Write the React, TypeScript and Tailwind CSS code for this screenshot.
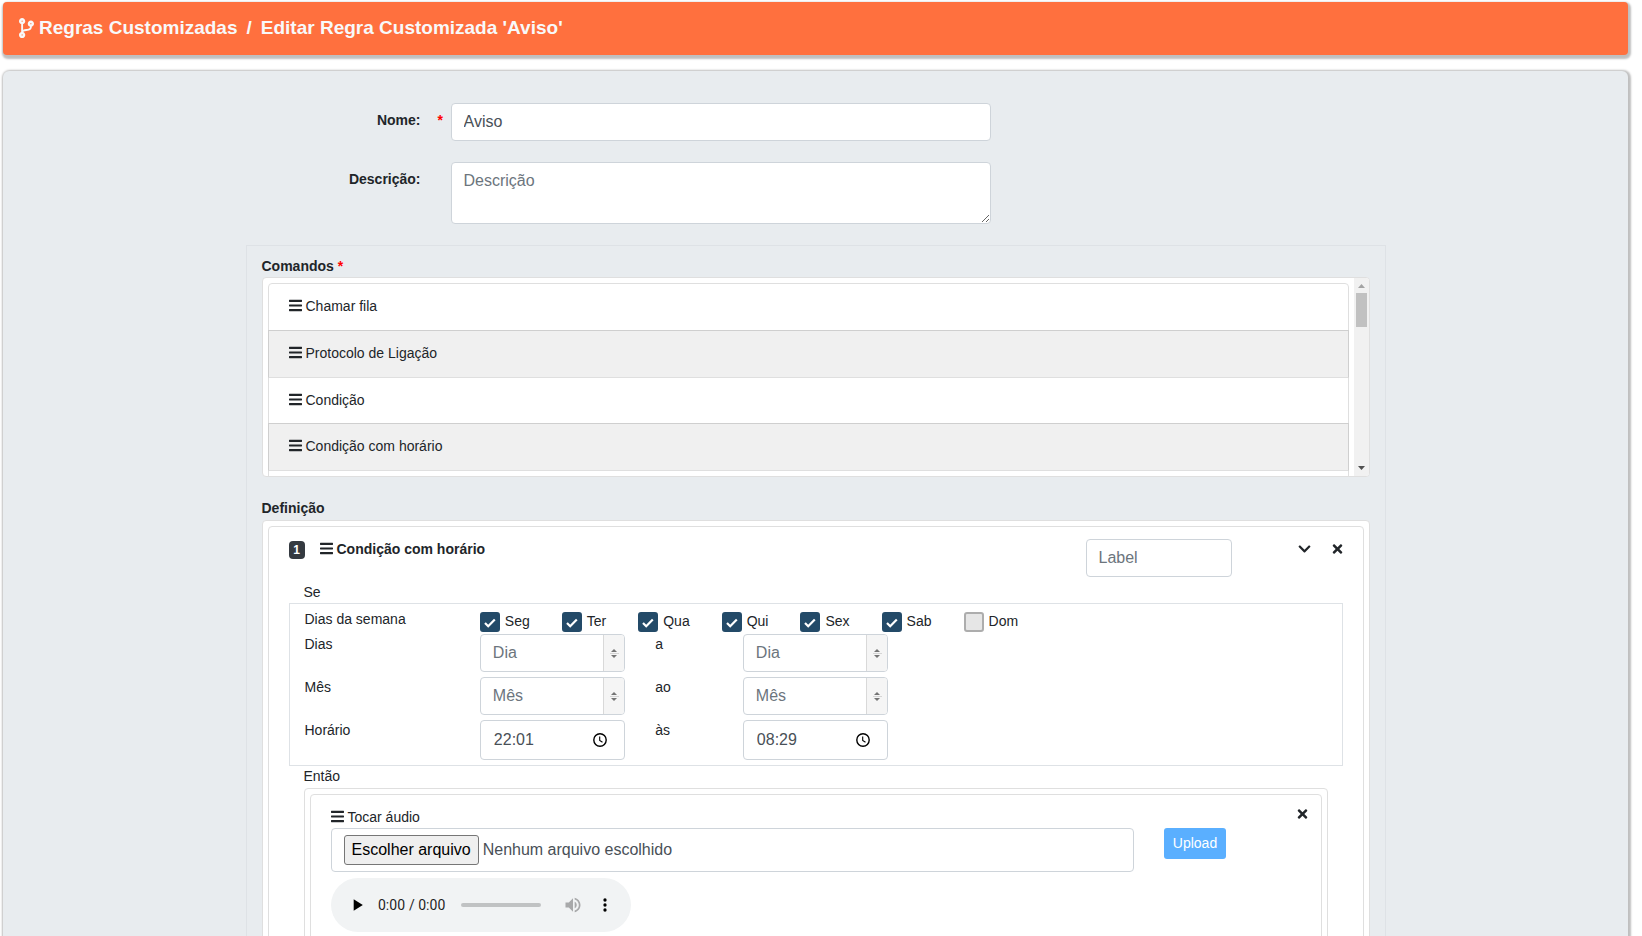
import { useState } from "react";
import { FaBars, FaChevronDown, FaCodeBranch, FaTimes } from "react-icons/fa";

const commands = ["Chamar fila", "Protocolo de Ligação", "Condição", "Condição com horário"];

const weekDays = ["Seg", "Ter", "Qua", "Qui", "Sex", "Sab", "Dom"];

const silence = "data:audio/wav;base64,UklGRiQAAABXQVZFZm10IBAAAAABAAEAQB8AAEAfAAABAAgAZGF0YQAAAAA=";

const field =
  "block w-full rounded border border-[#ced4da] bg-white px-3 text-base leading-6 text-[#495057] placeholder:text-[#6c757d] outline-none";

function Bars() {
  return <FaBars className="mb-[2px] h-[15px] w-[13px] shrink-0" />;
}

function NumberField({ id, label, placeholder }: { id: string; label: string; placeholder: string }) {
  const [value, setValue] = useState("");
  const step = (amount: number) => setValue(String(Number(value) + amount));

  return (
    <div className="flex h-[38px] overflow-hidden rounded border border-[#ced4da] bg-white">
      <input
        id={id}
        type="number"
        aria-label={label}
        placeholder={placeholder}
        value={value}
        onChange={(e) => setValue(e.target.value)}
        className="min-w-0 flex-1 px-3 text-base text-[#495057] placeholder:text-[#6c757d] outline-none [appearance:textfield] [&::-webkit-inner-spin-button]:appearance-none"
      />
      <div className="flex w-[21px] flex-col items-center justify-center border-l border-[#d9d9d9] bg-[#f5f5f5]">
        <button type="button" aria-label="Aumentar" onClick={() => step(1)} className="flex h-1 items-start">
          <svg width="6" height="3" viewBox="0 0 6 3" fill="#757575"><path d="M3 0L6 3H0z" /></svg>
        </button>
        <span className="h-px w-[9px] bg-[#d5d5d5]" />
        <button type="button" aria-label="Diminuir" onClick={() => step(-1)} className="flex h-1 items-end">
          <svg width="6" height="3" viewBox="0 0 6 3" fill="#757575"><path d="M3 3L6 0H0z" /></svg>
        </button>
      </div>
    </div>
  );
}

function TimeField({ id, label, initial }: { id: string; label: string; initial: string }) {
  return (
    <div className="flex h-10 items-center rounded border border-[#ced4da] bg-white pl-[13px] pr-[17px]">
      <input
        id={id}
        type="text"
        aria-label={label}
        defaultValue={initial}
        className="min-w-0 flex-1 text-base text-[#495057] outline-none"
      />
      <button type="button" aria-label="Escolher horário" className="shrink-0">
        <svg width="14" height="14" viewBox="0 0 14 14" fill="none" stroke="#000">
          <circle cx="7" cy="7" r="6.2" strokeWidth="1.4" />
          <path d="M6.7 3.4v4l2.8 1.8" strokeWidth="1.1" />
        </svg>
      </button>
    </div>
  );
}

function DayCheckbox({ day, defaultChecked }: { day: string; defaultChecked: boolean }) {
  return (
    <label className="flex items-start gap-[5px] leading-[18px]">
      <span className="grid size-5 place-items-center">
        <input
          type="checkbox"
          defaultChecked={defaultChecked}
          className="peer col-start-1 row-start-1 size-5 appearance-none rounded-[3px] border-2 border-[#adadad] bg-[#e6e6e6] checked:border-[#234a68] checked:bg-[#234a68]"
        />
        <svg
          className="pointer-events-none invisible col-start-1 row-start-1 mt-[2px] peer-checked:visible"
          width="12" height="10" viewBox="0 0 12 10" fill="none" stroke="#fff" strokeWidth="2.2"
        >
          <path d="M1 5l3.2 3.2L10.8 1.4" />
        </svg>
      </span>
      {day}
    </label>
  );
}

function RangeRow({ label, joiner, from, to }: { label: string; joiner: string; from: React.ReactNode; to: React.ReactNode }) {
  return (
    <div className="mb-[5px] grid grid-cols-12 leading-5">
      <div className="col-span-2 px-[15px]">{label}</div>
      <div className="col-span-2 px-[15px]">{from}</div>
      <div className="col-span-1 px-[15px]">{joiner}</div>
      <div className="col-span-2 px-[15px]">{to}</div>
    </div>
  );
}

function ScheduleCondition() {
  return (
    <div className="border border-[#dee2e6] pt-1">
      <div className="mb-[2px] grid grid-cols-12">
        <div className="col-span-2 px-[15px]">Dias da semana</div>
        <div className="col-span-10 flex items-start gap-8 px-[15px] pt-1">
          {weekDays.map((day) => (
            <DayCheckbox key={day} day={day} defaultChecked={day !== "Dom"} />
          ))}
        </div>
      </div>
      <RangeRow
        label="Dias"
        joiner="a"
        from={<NumberField id="dia-inicio" label="Dia inicial" placeholder="Dia" />}
        to={<NumberField id="dia-fim" label="Dia final" placeholder="Dia" />}
      />
      <RangeRow
        label="Mês"
        joiner="ao"
        from={<NumberField id="mes-inicio" label="Mês inicial" placeholder="Mês" />}
        to={<NumberField id="mes-fim" label="Mês final" placeholder="Mês" />}
      />
      <RangeRow
        label="Horário"
        joiner="às"
        from={<TimeField id="hora-inicio" label="Horário inicial" initial="22:01" />}
        to={<TimeField id="hora-fim" label="Horário final" initial="08:29" />}
      />
    </div>
  );
}

function CommandList() {
  return (
    <div className="flex h-[200px] overflow-hidden rounded border border-[#dfdfdf] bg-white">
      <ul className="m-[5px] flex-1 self-start rounded border border-[#dfdfdf]">
        {commands.map((command, index) => (
          <li
            key={command}
            className={
              index % 2
                ? "-mx-px -mt-px flex items-center gap-1 border border-[#cfcfcf] border-b-[#dfdfdf] bg-[#f0f0f0] px-5 pt-[11px] pb-[13px]"
                : "flex items-center gap-1 px-5 pt-[11px] pb-[13px] first:pb-[14px]"
            }
          >
            <Bars />
            {command}
          </li>
        ))}
        <li className="h-12" />
      </ul>
      {/* Scrollbar */}
      <div className="flex w-[15px] shrink-0 flex-col items-center justify-between bg-[#f1f1f1] pt-[6px] pb-[6px]">
        <div className="flex flex-col items-center gap-[5px]">
          <svg width="7" height="4" viewBox="0 0 7 4" fill="#a3a3a3"><path d="M3.5 0L7 4H0z" /></svg>
          <span className="h-[34px] w-[11px] bg-[#c1c1c1]" />
        </div>
        <svg width="7" height="4" viewBox="0 0 7 4" fill="#505050"><path d="M3.5 4L7 0H0z" /></svg>
      </div>
    </div>
  );
}

function PlayAudio() {
  return (
    <div className="rounded border border-[#dfdfdf] pt-3 pb-6">
      <div className="mb-px flex items-start pl-5 pr-[13px]">
        <div className="flex flex-1 items-center gap-1 leading-5">
          <Bars />
          Tocar áudio
        </div>
        <button type="button" aria-label="Remover">
          <FaTimes className="h-[14px] w-[11px]" />
        </button>
      </div>
      <div className="grid grid-cols-12 px-[5px]">
        <div className="col-span-10 px-[15px]">
          <label className="flex h-11 items-center gap-1 rounded border border-[#ced4da] px-3 text-base text-[#495057]">
            <input type="file" className="sr-only" />
            <span className="rounded-[3px] border border-[#767676] bg-[#efefef] px-[7px] py-[2px] leading-6 text-black">
              Escolher arquivo
            </span>
            Nenhum arquivo escolhido
          </label>
        </div>
        <div className="col-span-2 px-[15px]">
          <button type="button" className="h-[31px] rounded-[3px] bg-[#5aafff] px-[9px] pb-[2px] text-sm text-white">
            Upload
          </button>
        </div>
      </div>
      <audio controls preload="none" src={silence} className="mt-[6px] ml-5 h-[54px] w-[300px]" />
    </div>
  );
}

export default function App() {
  return (
    <div className="flex h-screen flex-col overflow-hidden bg-white pt-[2px] pr-[14px] pl-[3px] font-['Liberation_Sans',Arial,sans-serif] text-sm leading-[22px] text-[#212529]">
      <header className="flex h-[53px] shrink-0 items-center rounded bg-[#ff703e] px-4 pb-[2px] text-[19px] font-bold text-[#f8f9fa] shadow-[1px_2px_2px_2px_rgba(0,0,0,0.25)]">
        <FaCodeBranch className="mr-[5px] h-5 w-[15px]" />
        <a href="#regras">Regras Customizadas</a>
        <span className="mx-[9px]">/</span>
        <h1>Editar Regra Customizada 'Aviso'</h1>
      </header>

      <main className="mt-4 flex-1 rounded-t-md bg-[#e8ecef] pt-8 shadow-[1px_1px_2px_2px_rgba(0,0,0,0.25)]">
        <form className="mx-auto max-w-[1140px]">
          <div className="mb-[21px] grid grid-cols-[175px_30px_minmax(0,540px)]">
            <label htmlFor="nome" className="pt-[6px] text-right font-bold">Nome:</label>
            <span className="pt-[6px] pl-[17px] font-bold text-[red]">*</span>
            <input id="nome" type="text" defaultValue="Aviso" className={`${field} h-[38px]`} />
          </div>
          <div className="mb-[21px] grid grid-cols-[175px_30px_minmax(0,540px)]">
            <label htmlFor="descricao" className="pt-[6px] text-right font-bold">Descrição:</label>
            <span />
            <textarea id="descricao" rows={2} placeholder="Descrição" className={`${field} h-[62px] py-[6px]`} />
          </div>

          <div className="border border-[#dee2e6] px-[15px] pt-[9px]">
            {/* Commands */}
            <h2 className="font-bold">
              Comandos <span className="text-[red]">*</span>
            </h2>
            <CommandList />

            {/* Definition */}
            <h2 className="mt-[21px] mb-[2px] leading-5 font-bold">Definição</h2>
            <div className="rounded border border-[#dfdfdf] bg-white p-[5px]">
              <div className="rounded border border-[#dfdfdf] px-5 pt-3 pb-6">
                <div className="mb-1 flex items-start">
                  <span className="mt-[2px] mr-[15px] h-[18px] w-4 rounded bg-[#343a40] text-center text-xs leading-[18px] font-bold text-white">
                    1
                  </span>
                  <div className="flex flex-1 items-center gap-1 leading-5 font-bold">
                    <Bars />
                    Condição com horário
                  </div>
                  <input type="text" aria-label="Label" placeholder="Label" className={`${field} h-[38px] max-w-[146px]`} />
                  <button type="button" aria-label="Recolher" className="mt-[3px] ml-[66px]">
                    <FaChevronDown className="h-[14px] w-[13px]" />
                  </button>
                  <button type="button" aria-label="Remover" className="mt-[3px] ml-[21px]">
                    <FaTimes className="h-[14px] w-[11px]" />
                  </button>
                </div>
                <div className="pl-[15px]">Se</div>
                <ScheduleCondition />
                <div className="px-[15px]">
                  <div className="mb-[2px] leading-5">Então</div>
                  <div className="rounded border border-[#dfdfdf] p-[5px]">
                    <PlayAudio />
                  </div>
                </div>
              </div>
            </div>
          </div>
        </form>
      </main>
    </div>
  );
}
